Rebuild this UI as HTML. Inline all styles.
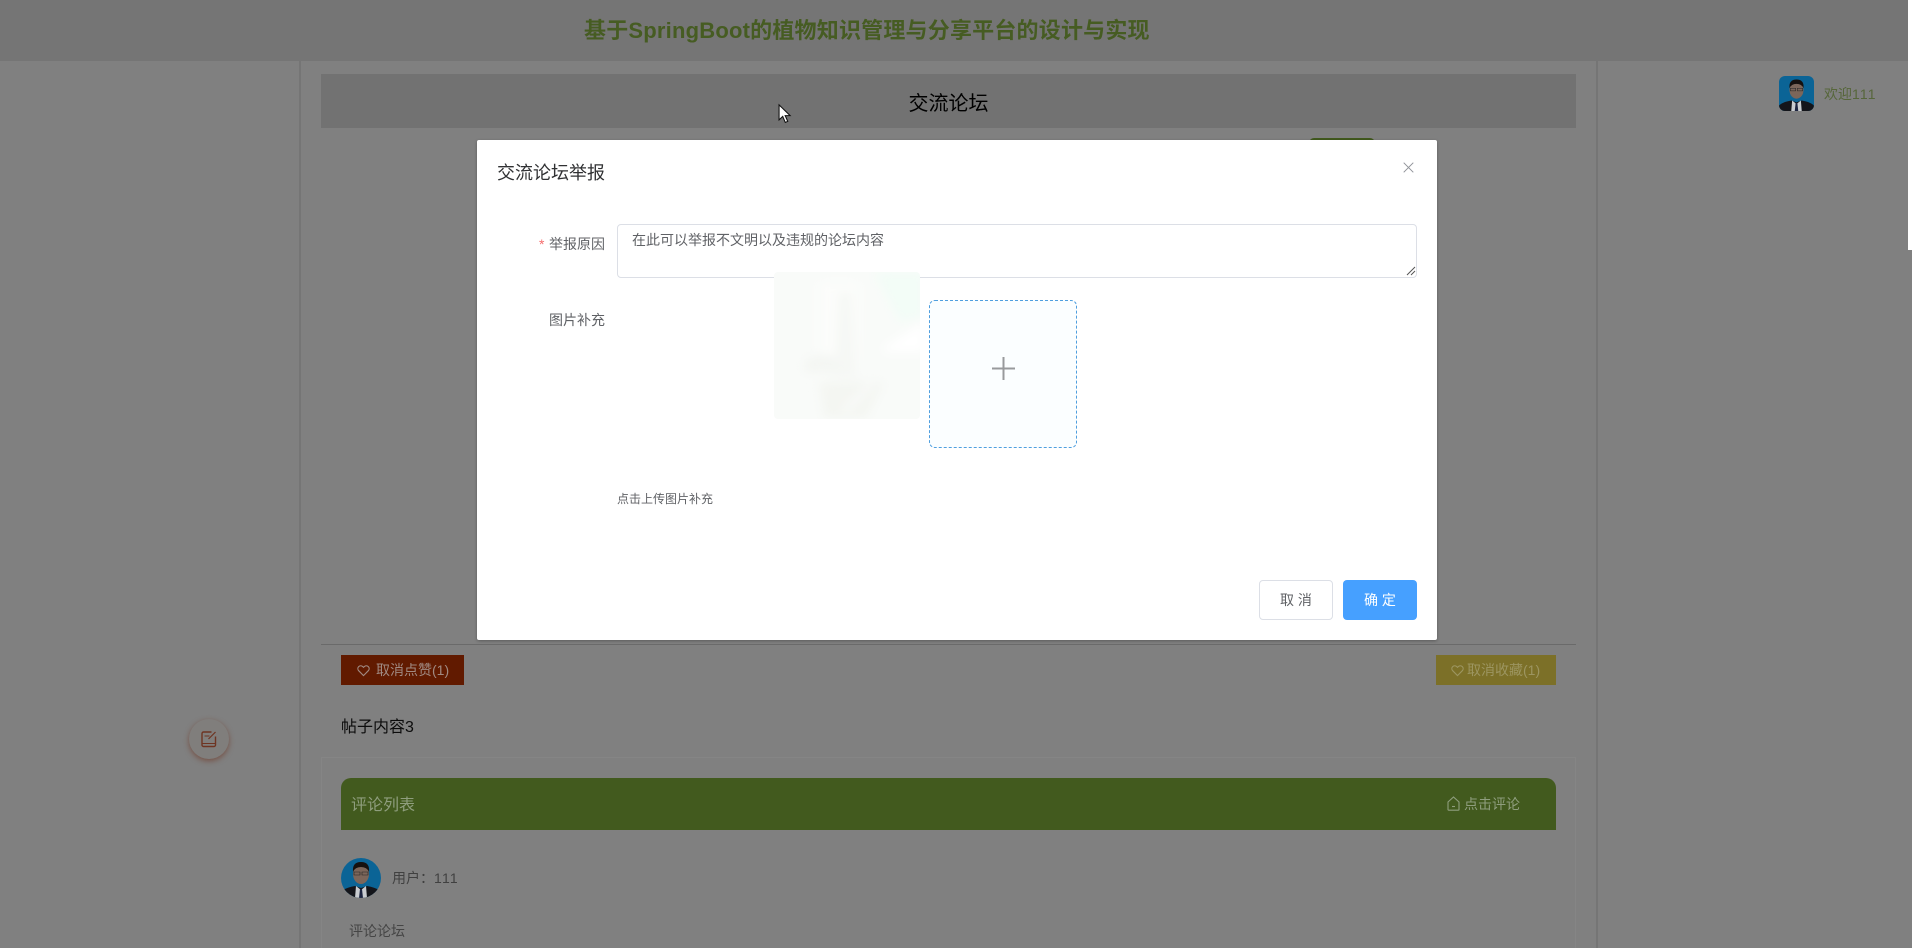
<!DOCTYPE html>
<html lang="zh"><head><meta charset="utf-8"><title>交流论坛</title>
<style>
*{box-sizing:border-box}
html,body{margin:0;padding:0;width:1912px;height:948px;overflow:hidden;background:#808080}
body{position:relative;font-family:"Liberation Sans","Noto Sans CJK SC",sans-serif;font-size:14px;color:#303133}
.a{position:absolute;white-space:nowrap}
.c{display:flex;align-items:center;justify-content:center}
</style></head><body>
<div class="a" style="left:0;top:0;width:1912px;height:61px;background:#757575"></div>
<div class="a" style="left:584px;top:15px;font-size:22px;line-height:32px;font-weight:700;color:#465c22;letter-spacing:.2px">基于SpringBoot的植物知识管理与分享平台的设计与实现</div>

<div class="a" style="left:299px;top:61px;width:2px;height:887px;background:#757575"></div>
<div class="a" style="left:1596px;top:61px;width:2px;height:887px;background:#757575"></div>
<div class="a" style="left:1908px;top:0;width:4px;height:250px;background:#fff"></div>

<div class="a c" style="left:321px;top:74px;width:1255px;height:54px;background:#727272;color:#000;font-size:20px">交流论坛</div>
<div class="a" style="left:1309px;top:138px;width:66px;height:10px;background:#425a1e;border-radius:5px 5px 0 0"></div>

<div class="a" style="left:778px;top:103px">
<svg width="15" height="22" viewBox="0 0 14 19" style="display:block"><path d="M1 1v14l3.4-3.2 2.4 5.6 2.3-1-2.4-5.4h4.6z" fill="#fff" stroke="#111" stroke-width="1"/></svg></div>

<div class="a" style="left:1779px;top:76px;width:35px;height:35px;border-radius:6px;overflow:hidden">
<svg width="35" height="35" viewBox="0 0 40 40" style="display:block"><rect width="40" height="40" fill="#0b6496"/><path d="M0 40v-6q3-4 14-6l6 2 6-2q11 2 14 6v6z" fill="#14151a"/><path d="M15 28l5 4 5-4 1 12H14z" fill="#c9ccd0"/><path d="M19 31h2l1 9h-4z" fill="#1c2440"/><ellipse cx="20" cy="16" rx="8" ry="10" fill="#7c665a"/><path d="M12 14q-1-10 8-10t8 10q-2-5-8-5t-8 5z" fill="#16110f"/><path d="M13 14h6v3h-6zM21 14h6v3h-6z" fill="none" stroke="#222" stroke-width=".6"/></svg></div>
<div class="a" style="left:1824px;top:84px;line-height:20px;color:#56663a">欢迎<span style="letter-spacing:1.1px">111</span></div>

<div class="a" style="left:321px;top:644px;width:1255px;height:1px;background:#6a6a6a"></div>

<div class="a" style="left:341px;top:655px;width:123px;height:30px;background:#611a00;color:#a08a82;line-height:30px">
<svg class="a" style="left:16px;top:9px" width="13" height="13" viewBox="0 0 14 14"><path d="M7 12.500L1.800 7.200a3.200 3.200 0 0 1 0-4.400 3.200 3.200 0 0 1 4.400 0L7 3.600l.8-.8a3.200 3.200 0 0 1 4.400 0 3.200 3.200 0 0 1 0 4.400z" fill="none" stroke="#a08a82" stroke-width="1.200"/></svg>
<span class="a" style="left:35px;top:0">取消点赞(1)</span></div>

<div class="a" style="left:1436px;top:655px;width:120px;height:30px;background:#7c7028;color:#9c9560;line-height:30px">
<svg class="a" style="left:15px;top:9px" width="13" height="13" viewBox="0 0 14 14"><path d="M7 12.500L1.800 7.200a3.200 3.200 0 0 1 0-4.400 3.200 3.200 0 0 1 4.400 0L7 3.600l.8-.8a3.200 3.200 0 0 1 4.400 0 3.200 3.200 0 0 1 0 4.400z" fill="none" stroke="#9c9560" stroke-width="1.200"/></svg>
<span class="a" style="left:31px;top:0">取消收藏(1)</span></div>

<div class="a" style="left:341px;top:715px;font-size:16px;line-height:26px;color:#0c0c0c">帖子内容3</div>

<div class="a" style="left:189px;top:719px;width:40px;height:40px;border-radius:50%;background:#807e7c;box-shadow:0 2px 6px rgba(110,50,30,.6)">
<svg class="a" style="left:11px;top:11px" width="18" height="18" viewBox="0 0 18 18"><path d="M15.500 6.500V15a1.500 1.500 0 0 1-1.500 1.500H3.500A1.500 1.500 0 0 1 2 15V3.500A1.500 1.500 0 0 1 3.500 2h8" fill="none" stroke="#6e3422" stroke-width="1.400"/><path d="M8.500 9L15.500 2" stroke="#6e3422" stroke-width="1.200"/><path d="M4.500 6h5M2 13.500h13.500" stroke="#6e3422" stroke-width="1.100"/></svg></div>

<div class="a" style="left:321px;top:757px;width:1255px;height:191px;border:1px solid #858585;border-bottom:0"></div>
<div class="a" style="left:341px;top:778px;width:1215px;height:52px;background:#425a1e;border-radius:10px 10px 0 0"></div>
<div class="a" style="left:351px;top:794px;font-size:16px;line-height:24px;color:#8f9e7e">评论列表</div>
<svg class="a" style="left:1447px;top:796px" width="13" height="15" viewBox="0 0 13 15"><path d="M1 6l5.500-5L12 6v7.500a.7.700 0 0 1-.7.700H1.700a.7.700 0 0 1-.7-.7z" fill="none" stroke="#8f9e7e" stroke-width="1.100"/><path d="M5 10.500h3" stroke="#8f9e7e" stroke-width="1.100"/></svg>
<div class="a" style="left:1464px;top:794px;line-height:20px;color:#8f9e7e">点击评论</div>

<div class="a" style="left:341px;top:858px;width:40px;height:40px;border-radius:50%;overflow:hidden">
<svg width="40" height="40" viewBox="0 0 40 40" style="display:block"><rect width="40" height="40" fill="#0b6496"/><path d="M0 40v-6q3-4 14-6l6 2 6-2q11 2 14 6v6z" fill="#14151a"/><path d="M15 28l5 4 5-4 1 12H14z" fill="#c9ccd0"/><path d="M19 31h2l1 9h-4z" fill="#1c2440"/><ellipse cx="20" cy="16" rx="8" ry="10" fill="#7c665a"/><path d="M12 14q-1-10 8-10t8 10q-2-5-8-5t-8 5z" fill="#16110f"/><path d="M13 14h6v3h-6zM21 14h6v3h-6z" fill="none" stroke="#222" stroke-width=".6"/></svg></div>
<div class="a" style="left:392px;top:868px;line-height:20px;color:#404040">用户：<span style="letter-spacing:1.2px">111</span></div>
<div class="a" style="left:349px;top:921px;line-height:20px;color:#454545">评论论坛</div>

<div class="a" style="left:477px;top:140px;width:960px;height:500px;background:#fff;border-radius:2px;box-shadow:0 1px 3px rgba(0,0,0,.3)"></div>
<div class="a" style="left:497px;top:160px;font-size:18px;line-height:26px;color:#303133">交流论坛举报</div>
<svg class="a" style="left:1403px;top:162px" width="11" height="11" viewBox="0 0 11 11"><path d="M.7.7l9.600 9.600M10.300.7L.7 10.300" stroke="#909399" stroke-width="1"/></svg>

<div class="a" style="left:539px;top:234px;line-height:20px;color:#f56c6c">*</div>
<div class="a" style="left:549px;top:234px;line-height:20px;color:#606266">举报原因</div>
<div class="a" style="left:617px;top:224px;width:800px;height:54px;border:1px solid #dcdfe6;border-radius:4px;background:#fff"></div>
<div class="a" style="left:632px;top:230px;line-height:21px;color:#606266">在此可以举报不文明以及违规的论坛内容</div>
<svg class="a" style="left:1406px;top:266px" width="10" height="10" viewBox="0 0 10 10"><path d="M1 9l8-8M5 9l4-4" stroke="#555" stroke-width="1"/></svg>

<div class="a" style="left:549px;top:310px;line-height:20px;color:#606266">图片补充</div>

<svg class="a" style="left:774px;top:272px" width="148" height="148" viewBox="0 0 148 148">
<defs><filter id="b" x="-20%" y="-20%" width="140%" height="140%"><feGaussianBlur stdDeviation="5"/></filter><clipPath id="k"><rect width="146" height="147" rx="4"/></clipPath></defs>
<g clip-path="url(#k)"><rect width="146" height="147" fill="#f9fbf9"/>
<g filter="url(#b)"><path d="M100 0h50v45l-24 5z" fill="#f3fdf7"/><path d="M110 75l40-25v30h-40z" fill="#fff"/><path d="M45 10h40v90H45z" fill="#fcfdfb"/><path d="M65 20l12 0 6 85H60z" fill="#f6f8f5"/><path d="M30 90q20-15 35 0v10H30z" fill="#f4f6f3"/><path d="M45 110h65l-18 36H50z" fill="#f4f6f2"/><path d="M70 140l28-28" stroke="#fbfcfb" stroke-width="5"/></g></g>
</svg>
<div class="a" style="left:929px;top:300px;width:148px;height:148px;background:#fbfeff;border:1px dashed #4f9fdf;border-radius:6px"></div>
<svg class="a" style="left:992px;top:357px" width="23" height="23" viewBox="0 0 23 23"><path d="M11.500 0v23M0 11.500h23" stroke="#989a9c" stroke-width="2"/></svg>

<div class="a" style="left:617px;top:491px;font-size:12px;line-height:16px;color:#606266">点击上传图片补充</div>

<div class="a c" style="left:1259px;top:580px;width:74px;height:40px;border:1px solid #dcdfe6;border-radius:4px;background:#fff;color:#606266">取 消</div>
<div class="a c" style="left:1343px;top:580px;width:74px;height:40px;border-radius:4px;background:#46a0ff;color:#fff">确 定</div>
</body></html>
